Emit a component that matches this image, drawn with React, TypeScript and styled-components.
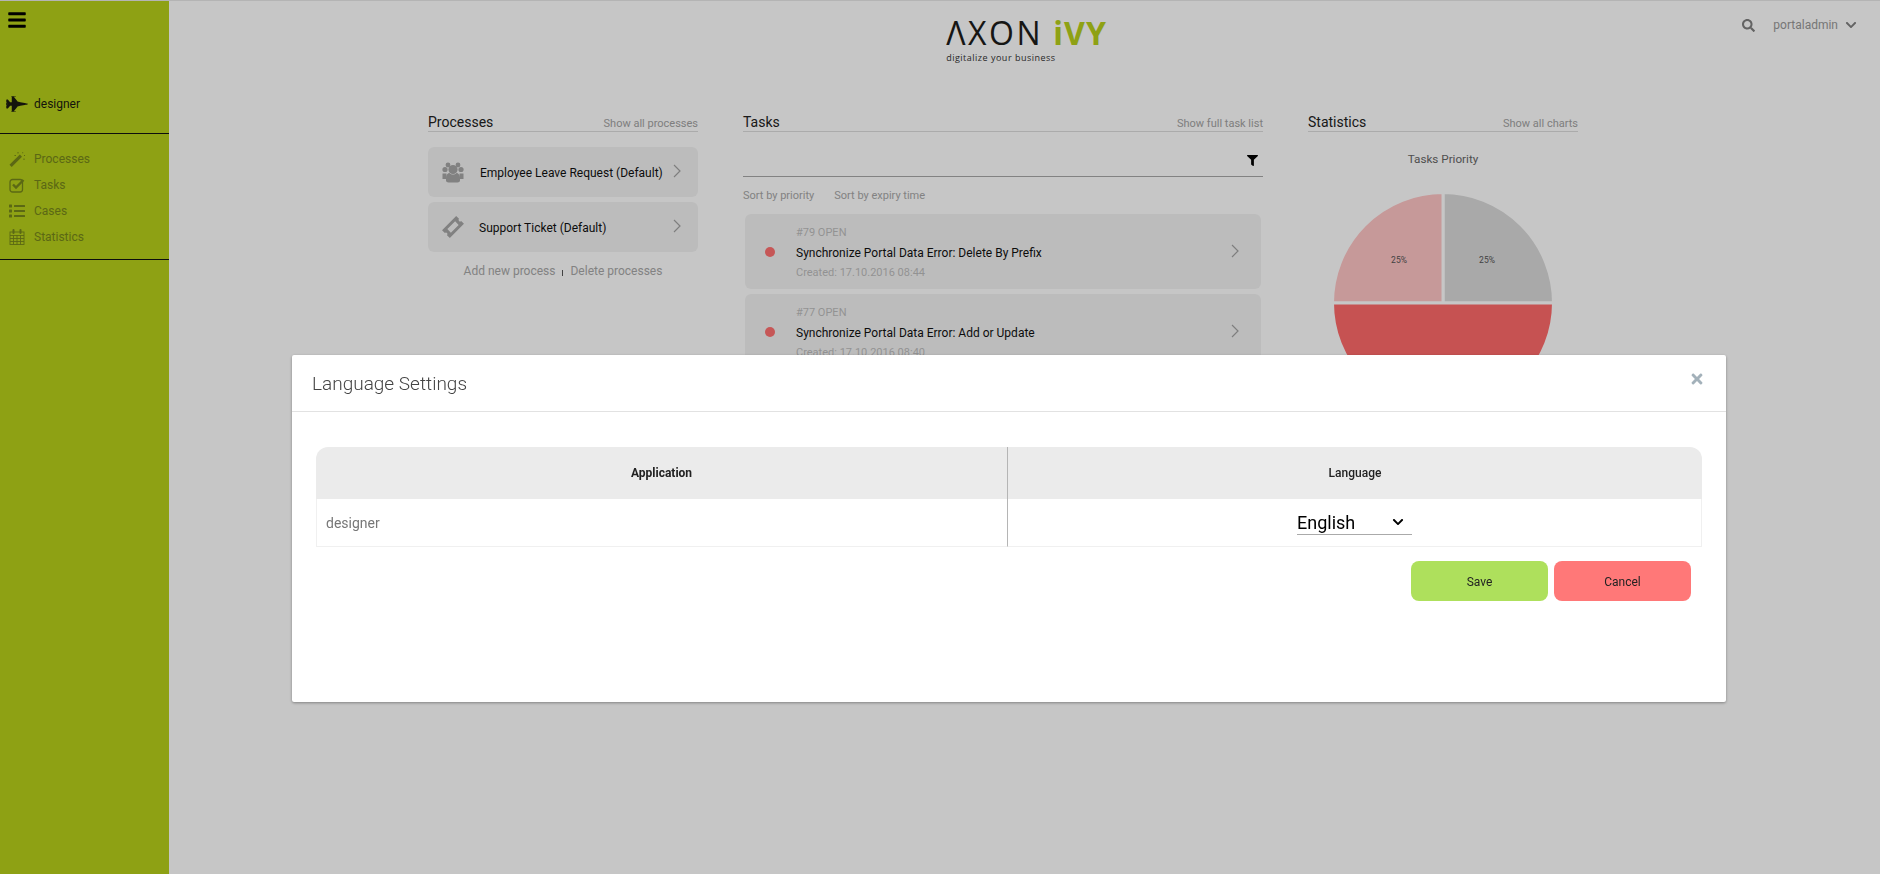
import * as React from 'react'
import styled, { createGlobalStyle } from 'styled-components'
import {
  FaBars,
  FaChevronDown,
  FaFighterJet,
  FaFilter,
  FaList,
  FaSearch,
  FaTimes,
} from 'react-icons/fa'

const GlobalStyle = createGlobalStyle`
  html, body { margin: 0; padding: 0; height: 100%; background: #fff; }
  body { font-family: Roboto, "Liberation Sans", sans-serif; overflow: hidden; }
  * { box-sizing: border-box; }
`

const Page = styled.div`
  display: flex;
  height: 874px;
  border-top: 1px solid #e8e8e8;
  overflow: hidden;
`

// SIDEBAR
const Sidebar = styled.aside`
  width: 169px;
  flex-shrink: 0;
  background: #b7d01a;
  box-shadow: 1px 0 2px rgba(0, 0, 0, 0.12);
`

const MenuToggle = styled.div`
  height: 87px;
  padding: 9px 0 0 7px;
  color: #000;
  font-size: 20px;
  line-height: 1;
`

const AppRow = styled.div`
  display: flex;
  align-items: center;
  height: 46px;
  padding: 0 0 13px 6px;
  border-bottom: 1px solid #111;
  color: #1a1a10;
  font-size: 12px;
  svg { width: 22px; height: 22px; margin-right: 6px; }
`

const NavList = styled.nav`
  padding: 12px 0 9px;
  border-bottom: 1px solid #111;
`

const NavItem = styled.div`
  display: flex;
  align-items: center;
  height: 26px;
  padding-left: 9px;
  color: #76861a;
  font-size: 12px;
  svg { width: 16px; height: 16px; margin-right: 9px; flex-shrink: 0; }
`

// MAIN
const Main = styled.main`
  flex: 1;
  min-width: 0;
  background: #fff;
`

const TopBar = styled.header`
  display: grid;
  grid-template-columns: 1fr auto 1fr;
  height: 94px;
  padding: 0 23px 0 27px;
`

const Logo = styled.div`
  grid-column: 2;
  padding-top: 14px;
`

const LogoMark = styled.div`
  display: flex;
  align-items: baseline;
  height: 35px;
  font-family: "Open Sans", sans-serif;
  font-size: 32px;
  line-height: 35px;
  white-space: nowrap;
`

const LogoAxon = styled.span`
  color: #1d1d1b;
  font-weight: 400;
  letter-spacing: 2.6px;
  margin-right: 10px;
`

const LogoIvy = styled.span`
  color: #b7d01a;
  font-weight: 700;
  letter-spacing: 1px;
`

const LogoTag = styled.div`
  margin-top: 2px;
  font-family: "Open Sans", sans-serif;
  font-size: 9px;
  letter-spacing: 0.5px;
  color: #333;
  line-height: 12px;
`

const UserBox = styled.div`
  grid-column: 3;
  justify-self: end;
  display: flex;
  align-items: center;
  height: 48px;
  color: #999;
  font-size: 12px;
`

const SearchIcon = styled(FaSearch)`
  width: 13px;
  height: 13px;
  margin-right: 18px;
  color: #808080;
`

const UserChevron = styled(FaChevronDown)`
  width: 12px;
  height: 12px;
  margin-left: 7px;
  color: #808080;
`

const Columns = styled.div`
  display: flex;
  gap: 45px;
  padding-left: 259px;
`

const Column = styled.section<{ $width: number }>`
  width: ${(p) => p.$width}px;
  flex-shrink: 0;
`

const SectionHead = styled.div`
  display: flex;
  justify-content: space-between;
  align-items: baseline;
  height: 37px;
  padding-top: 18px;
  border-bottom: 1px solid #dcdcdc;
  line-height: 18px;
`

const SectionTitle = styled.h2`
  margin: 0;
  font-size: 14px;
  font-weight: 400;
  color: #222;
`

const SectionLink = styled.a`
  font-size: 11px;
  color: #a3a3a3;
`

const ProcessList = styled.div`
  display: flex;
  flex-direction: column;
  gap: 5px;
  margin-top: 15px;
`

const ProcessCard = styled.div`
  display: flex;
  align-items: center;
  height: 50px;
  background: #f3f3f3;
  border-radius: 6px;
  color: #111;
  font-size: 12px;
`

const ProcessLabel = styled.span`
  padding-top: 1px;
`

const ProcessIcon = styled.span<{ $gap: number }>`
  display: flex;
  justify-content: center;
  width: 22px;
  margin: 0 ${(p) => p.$gap}px 0 14px;
  color: #a6a6a6;
  svg { width: 22px; height: 22px; }
`

const Chevron = styled.svg`
  width: 8px;
  height: 14px;
  flex-shrink: 0;
  margin-left: auto;
  fill: none;
  stroke: #a3a3a3;
  stroke-width: 1.2;
`

const ProcessChevron = styled(Chevron)`
  margin-right: 17px;
  margin-top: -3px;
`

const ProcessActions = styled.div`
  display: flex;
  justify-content: center;
  align-items: center;
  gap: 7px;
  margin-top: 11px;
  font-size: 12px;
  color: #a8a8a8;
  line-height: 16px;
`

const Divider = styled.span`
  width: 1px;
  height: 6px;
  margin-top: 3px;
  background: #555;
`

const FilterRow = styled.div`
  display: flex;
  align-items: flex-end;
  justify-content: flex-end;
  height: 45px;
  padding: 0 5px 10px 0;
  border-bottom: 1px solid #a8a8a8;
  color: #000;
  svg { width: 11px; height: 11px; }
`

const SortRow = styled.div`
  display: flex;
  gap: 20px;
  height: 37px;
  align-items: center;
  font-size: 11px;
  color: #a8a8a8;
`

const TaskCard = styled.div`
  display: flex;
  align-items: center;
  height: 75px;
  margin: 0 2px 5px;
  background: #f3f3f3;
  border-radius: 6px;
`

const PriorityDot = styled.span`
  width: 10px;
  height: 10px;
  margin: 0 21px 0 20px;
  border-radius: 50%;
  background: #ff7070;
`

const TaskInfo = styled.div`
  display: flex;
  flex-direction: column;
  gap: 6px;
  padding-top: 2px;
  font-size: 11px;
  line-height: 14px;
  color: #bdbdbd;
`

const TaskTitle = styled.div`
  font-size: 12px;
  color: #111;
`

const TaskChevron = styled(Chevron)`
  margin-right: 22px;
  margin-top: -2px;
`

const ChartTitle = styled.div`
  margin-top: 20px;
  text-align: center;
  font-size: 11.7px;
  line-height: 14px;
  color: #666;
`

const PieChart = styled.svg`
  display: block;
  width: 224px;
  height: 224px;
  margin: 25px auto 0;
`

const PieLabel = styled.text`
  font-family: Roboto, sans-serif;
  font-size: 8.5px;
  fill: #555;
  text-anchor: middle;
`

// DIALOG
const Overlay = styled.div`
  position: fixed;
  inset: 0;
  padding: 355px 0 0 292px;
  background: rgba(0, 0, 0, 0.224);
`

const Modal = styled.div`
  position: relative;
  width: 1434px;
  height: 347px;
  background: #fff;
  border-radius: 2px;
  box-shadow: 0 1px 3px rgba(0, 0, 0, 0.35);
`

const ModalHead = styled.div`
  display: flex;
  align-items: center;
  height: 57px;
  padding-left: 20px;
  border-bottom: 1px solid #e2e2e2;
`

const ModalTitle = styled.h3`
  margin: 0;
  font-size: 19px;
  font-weight: 300;
  color: #444;
`

const CloseIcon = styled(FaTimes)`
  position: absolute;
  top: 16px;
  right: 21px;
  width: 16px;
  height: 16px;
  color: #a3b1ba;
`

const ModalBody = styled.div`
  padding: 35px 24px 0;
`

const Table = styled.div`
  display: grid;
  grid-template-columns: 691px 1fr;
  border-radius: 12px 12px 0 0;
  overflow: hidden;
`

const HeadCell = styled.div<{ $weight: number }>`
  display: flex;
  align-items: center;
  justify-content: center;
  height: 52px;
  background: #ebebeb;
  font-size: 12px;
  font-weight: ${(p) => p.$weight};
  color: #222;
  & + & { border-left: 1px solid #b5b5b5; }
`

const BodyCell = styled.div`
  display: flex;
  align-items: center;
  height: 48px;
  padding-left: 9px;
  border-bottom: 1px solid #f0f0f0;
  border-left: 1px solid #f0f0f0;
  font-size: 14px;
  color: #777;
  & + & {
    justify-content: center;
    padding-left: 0;
    border-left: 1px solid #b5b5b5;
    border-right: 1px solid #f0f0f0;
  }
`

const SelectWrap = styled.div`
  position: relative;
  width: 115px;
`

const LanguageSelect = styled.select`
  display: block;
  width: 100%;
  height: 25px;
  padding: 0;
  border: 0;
  border-bottom: 1px solid #aaa;
  background: transparent;
  appearance: none;
  font-family: Roboto, sans-serif;
  font-size: 18px;
  color: #000;
  outline: none;
`

const SelectArrow = styled(FaChevronDown)`
  position: absolute;
  top: 6px;
  right: 8px;
  width: 12px;
  height: 12px;
  color: #000;
  pointer-events: none;
`

const ActionRow = styled.div`
  display: flex;
  justify-content: flex-end;
  gap: 6px;
  margin-top: 14px;
  padding-right: 11px;
`

const ActionButton = styled.button<{ $bg: string }>`
  width: 137px;
  height: 40px;
  padding-top: 3px;
  border: 0;
  border-radius: 8px;
  background: ${(p) => p.$bg};
  font-family: Roboto, sans-serif;
  font-size: 12px;
  color: #222;
`

const ChevronRight = ({ as: As }: { as: typeof Chevron }) => (
  <As viewBox="0 0 8 14">
    <path d="M1 1l6 6-6 6" />
  </As>
)

const WandIcon = () => (
  <svg viewBox="0 0 16 16" fill="currentColor">
    <path d="M0.5 13.8L10.8 3.5l2.2 2.2L2.7 16z" />
    <path d="M13.2 1.2h1v1h-1zM15 4h1v1h-1zM8.5 1h1v1.4h-1zM5.5 4h1.4v1H5.5zM14.5 7.5h1v1.4h-1z" />
  </svg>
)

const CheckBoxIcon = () => (
  <svg viewBox="0 0 16 16">
    <rect x="1" y="2.5" width="12.5" height="12.5" rx="2.5" fill="none" stroke="currentColor" strokeWidth="1.3" />
    <path d="M4 7.5l3 3 7.5-7.5" fill="none" stroke="currentColor" strokeWidth="2.4" />
  </svg>
)

const CalendarIcon = () => (
  <svg viewBox="0 0 16 16" fill="none" stroke="currentColor" strokeWidth="0.9">
    <rect x="1" y="3" width="14" height="12.5" />
    <path d="M1 6.5h14M1 9.5h14M1 12.5h14M4.5 6.5v9M8 6.5v9M11.5 6.5v9" />
    <path d="M4.5 1v3M11.5 1v3" strokeWidth="2" strokeLinecap="round" />
  </svg>
)

const UsersIcon = () => (
  <svg viewBox="0 0 22 22" fill="currentColor">
    <circle cx="6" cy="4" r="2.4" />
    <circle cx="16" cy="4" r="2.4" />
    <circle cx="3" cy="8.5" r="2.6" />
    <circle cx="19" cy="8.5" r="2.6" />
    <circle cx="11" cy="8.5" r="4.6" />
    <path d="M0.5 12.5h4v5.5h-4zM17.5 12.5h4v5.5h-4z" />
    <path d="M4 17c0-3.5 2-5 3.5-5 1 1 2.2 1.6 3.5 1.6s2.5-.6 3.5-1.6c1.5 0 3.5 1.5 3.5 5v2.5c0 1.3-1.2 2-2.5 2h-9C5.200 21.500 4 20.800 4 19.500z" />
  </svg>
)

const TicketIcon = () => (
  <svg viewBox="0 0 22 22" fill="currentColor">
    <g transform="rotate(-45 11 11)">
      <path
        fillRule="evenodd"
        d="M1 5.500h20v4a1.500 1.500 0 0 0 0 3v4H1v-4a1.500 1.500 0 0 0 0-3zM5.500 8.500v5h11v-5z"
      />
    </g>
  </svg>
)

const navItems = [
  { label: 'Processes', icon: <WandIcon /> },
  { label: 'Tasks', icon: <CheckBoxIcon /> },
  { label: 'Cases', icon: <FaList /> },
  { label: 'Statistics', icon: <CalendarIcon /> },
]

const tasks = [
  { id: '#79 OPEN', title: 'Synchronize Portal Data Error: Delete By Prefix', created: 'Created: 17.10.2016 08:44' },
  { id: '#77 OPEN', title: 'Synchronize Portal Data Error: Add or Update', created: 'Created: 17.10.2016 08:40' },
]

export default function App() {
  return (
    <>
      <GlobalStyle />
      <Page>
        <Sidebar>
          <MenuToggle>
            <FaBars />
          </MenuToggle>
          <AppRow>
            <FaFighterJet />
            designer
          </AppRow>
          <NavList>
            {navItems.map((item) => (
              <NavItem key={item.label}>
                {item.icon}
                {item.label}
              </NavItem>
            ))}
          </NavList>
        </Sidebar>

        <Main>
          <TopBar>
            <Logo>
              <LogoMark>
                <LogoAxon>ΛXON</LogoAxon>
                <LogoIvy>iVY</LogoIvy>
              </LogoMark>
              <LogoTag>digitalize your business</LogoTag>
            </Logo>
            <UserBox>
              <SearchIcon />
              portaladmin
              <UserChevron />
            </UserBox>
          </TopBar>

          <Columns>
            <Column $width={270}>
              <SectionHead>
                <SectionTitle>Processes</SectionTitle>
                <SectionLink>Show all processes</SectionLink>
              </SectionHead>
              <ProcessList>
                <ProcessCard>
                  <ProcessIcon $gap={16}>
                    <UsersIcon />
                  </ProcessIcon>
                  <ProcessLabel>Employee Leave Request (Default)</ProcessLabel>
                  <ChevronRight as={ProcessChevron} />
                </ProcessCard>
                <ProcessCard>
                  <ProcessIcon $gap={15}>
                    <TicketIcon />
                  </ProcessIcon>
                  <ProcessLabel>Support Ticket (Default)</ProcessLabel>
                  <ChevronRight as={ProcessChevron} />
                </ProcessCard>
              </ProcessList>
              <ProcessActions>
                <span>Add new process</span>
                <Divider />
                <span>Delete processes</span>
              </ProcessActions>
            </Column>

            <Column $width={520}>
              <SectionHead>
                <SectionTitle>Tasks</SectionTitle>
                <SectionLink>Show full task list</SectionLink>
              </SectionHead>
              <FilterRow>
                <FaFilter />
              </FilterRow>
              <SortRow>
                <span>Sort by priority</span>
                <span>Sort by expiry time</span>
              </SortRow>
              {tasks.map((task) => (
                <TaskCard key={task.id}>
                  <PriorityDot />
                  <TaskInfo>
                    <span>{task.id}</span>
                    <TaskTitle>{task.title}</TaskTitle>
                    <span>{task.created}</span>
                  </TaskInfo>
                  <ChevronRight as={TaskChevron} />
                </TaskCard>
              ))}
            </Column>

            <Column $width={270}>
              <SectionHead>
                <SectionTitle>Statistics</SectionTitle>
                <SectionLink>Show all charts</SectionLink>
              </SectionHead>
              <ChartTitle>Tasks Priority</ChartTitle>
              <PieChart viewBox="-112 -112 224 224">
                <g stroke="#fff" strokeWidth="3">
                  <path d="M0 0V-110.500A110.500 110.500 0 0 1 110.500 0Z" fill="#dadada" />
                  <path d="M0 0H-110.500A110.500 110.500 0 0 1 0 -110.500Z" fill="#ffc5c5" />
                  <path d="M110.500 0A110.500 110.500 0 0 1 -110.500 0Z" fill="#ff6a6a" />
                </g>
                <PieLabel x="-44" y="-40">25%</PieLabel>
                <PieLabel x="44" y="-40">25%</PieLabel>
              </PieChart>
            </Column>
          </Columns>
        </Main>
      </Page>

      <Overlay>
        <Modal>
          <ModalHead>
            <ModalTitle>Language Settings</ModalTitle>
            <CloseIcon />
          </ModalHead>
          <ModalBody>
            <Table>
              <HeadCell $weight={700}>Application</HeadCell>
              <HeadCell $weight={500}>Language</HeadCell>
              <BodyCell>designer</BodyCell>
              <BodyCell>
                <SelectWrap>
                  <LanguageSelect defaultValue="en">
                    <option value="en">English</option>
                    <option value="de">German</option>
                  </LanguageSelect>
                  <SelectArrow />
                </SelectWrap>
              </BodyCell>
            </Table>
            <ActionRow>
              <ActionButton $bg="#aee05c">Save</ActionButton>
              <ActionButton $bg="#ff7878">Cancel</ActionButton>
            </ActionRow>
          </ModalBody>
        </Modal>
      </Overlay>
    </>
  )
}
